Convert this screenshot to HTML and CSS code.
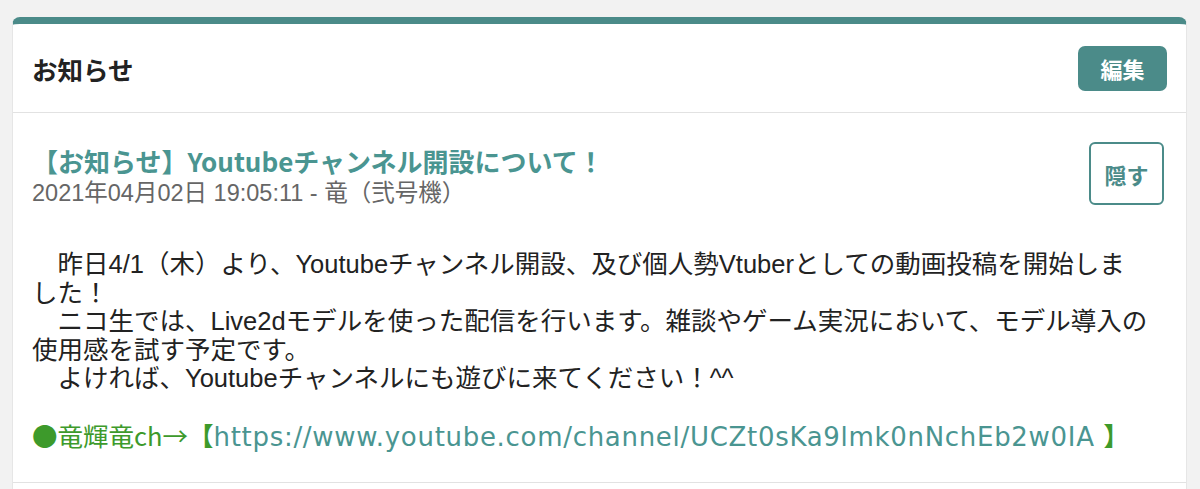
FILE: index.html
```html
<!doctype html>
<html lang="ja">
    <head>
        <meta charset="UTF-8" />
        <meta name="viewport" content="width=device-width, initial-scale=1.0" />
        <title>お知らせ</title>
        <link rel="stylesheet" href="styles.css">
    </head>
    <body>
        <div class="card">
            <div class="card-header">
                <h2 class="card-title">お知らせ</h2>
                <button class="btn-edit">編集</button>
            </div>

            <div class="news">
                <div class="news-head">
                    <div class="news-meta">
                        <a href="#" class="news-title">【お知らせ】Youtubeチャンネル開設について！</a>
                        <div class="news-date">2021年04月02日 19:05:11 - 竜（弐号機）</div>
                    </div>
                    <button class="btn-hide">隠す</button>
                </div>
                <p class="news-body">
                    　昨日4/1（木）より、Youtubeチャンネル開設、及び個人勢Vtuberとしての動画投稿を開始しま<br>した！<br>
                    　ニコ生では、Live2dモデルを使った配信を行います。雑談やゲーム実況において、モデル導入の<br>使用感を試す予定です。<br>
                    　よければ、Youtubeチャンネルにも遊びに来てください！^^<br>
                    <br>
                    <span class="green">●竜輝竜ch→</span><span class="green bracket">【</span><a href="#" class="news-link">https://www.youtube.com/channel/UCZt0sKa9lmk0nNchEb2w0IA </a><span class="green bracket">】</span>
                </p>
            </div>
            <div class="news"></div>
        </div>
    </body>
</html>
```

FILE: styles.css
```css
body {
    background-color: #f2f2f2;
    margin: 0;
    padding: 17px 13px 0 12px;
    font-family: "Noto Sans CJK JP", sans-serif;
    color: #222;
}

.card {
    background-color: white;
    border-top: 7px solid #4b8b89;
    border-left: 1px solid #e6e6e6;
    border-right: 1px solid #e6e6e6;
    border-radius: 8px 8px 0 0;
}

.card-header {
    display: flex;
    justify-content: space-between;
    align-items: center;
    height: 88px;
    padding: 0 19px 0 19px;
    border-bottom: 1px solid #e2e2e2;
}

.card-title {
    margin: 0;
    font-size: 25.5px;
    font-weight: bold;
    color: #222;
}

.btn-edit {
    width: 89px;
    height: 45px;
    background-color: #4b8b89;
    color: white;
    font-family: "Noto Sans CJK JP", sans-serif;
    font-size: 22px;
    font-weight: bold;
    border: none;
    border-radius: 7px;
    cursor: pointer;
}

.news {
    padding: 29px 22px 30px 19px;
    border-bottom: 1px solid #e2e2e2;
}

.news-head {
    display: flex;
    justify-content: space-between;
    align-items: flex-start;
}

.news-meta {
    padding-top: 3px;
}

.news-title {
    display: block;
    font-size: 26px;
    font-weight: bold;
    line-height: 32px;
    color: #4a9591;
    text-decoration: none;
}

.news-date {
    font-family: "Liberation Sans", "Noto Sans CJK JP", sans-serif;
    font-size: 23.5px;
    line-height: 32px;
    color: #666;
}

.btn-hide {
    width: 75px;
    height: 63px;
    background-color: white;
    color: #4b8b89;
    font-family: "Noto Sans CJK JP", sans-serif;
    font-size: 22px;
    font-weight: bold;
    border: 2px solid #4b8b89;
    border-radius: 6px;
    cursor: pointer;
}

.news-body {
    margin: 41px 0 0 0;
    font-family: "Liberation Sans", "Noto Sans CJK JP", sans-serif;
    font-size: 25.5px;
    line-height: 28.5px;
    white-space: nowrap;
}

.green {
    color: #3d9a2b;
    font-family: "Noto Sans CJK JP", sans-serif;
}

.bracket {
    font-weight: bold;
}

.news-link {
    font-family: "DejaVu Sans", "Noto Sans CJK JP", sans-serif;
    font-size: 26px;
    letter-spacing: 0.7px;
    color: #4a9591;
    text-decoration: none;
}
```
